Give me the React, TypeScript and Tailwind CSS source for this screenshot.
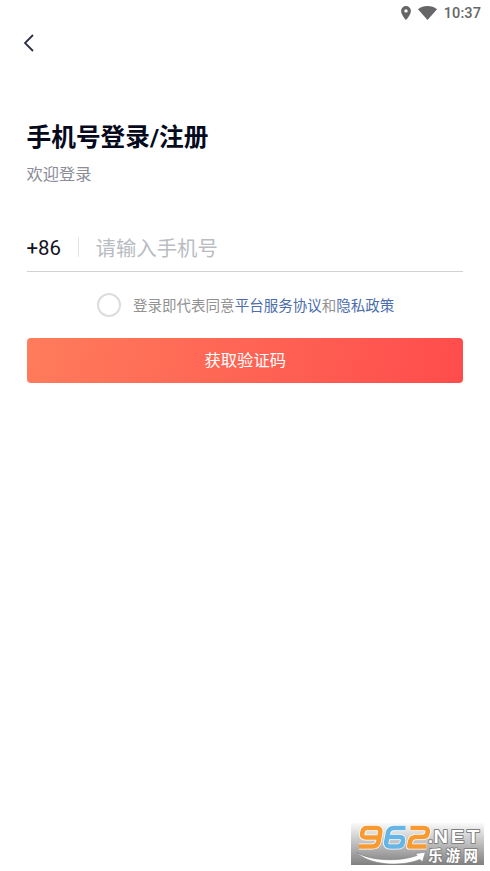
import { useState } from "react";

function StatusBar() {
  return (
    <div className="flex h-[26px] items-center justify-end pr-[9px] text-[#666666]">
      <svg width="10" height="14" viewBox="0 0 10 14" fill="currentColor" aria-hidden="true">
        <path
          fillRule="evenodd"
          d="M5 0a4.9 4.9 0 0 0-4.9 4.9C.1 8.5 5 14 5 14s4.9-5.500 4.900-9.100A4.900 4.900 0 0 0 5 0Zm0 3.200a1.700 1.700 0 1 1 0 3.400a1.700 1.700 0 0 1 0-3.400Z"
        />
      </svg>
      <svg className="ml-[7px]" width="19" height="14" viewBox="0 0 19 14" fill="currentColor" aria-hidden="true">
        <path d="M0 3.200C2.700 1.100 6 0 9.500 0S16.300 1.100 19 3.200L9.500 14Z" />
      </svg>
      <span className="ml-[7px] pt-0.5 text-[14.500px] leading-none font-medium tracking-[0.1px]">10:37</span>
    </div>
  );
}

const nine =
  "M26.500 14.500H15Q10.500 14.500 11.200 10.500L11.800 8Q12.500 5 16 5H25.500Q30 5 29.200 9.500L27.500 18.500Q26.500 23.500 21 23.500H8";
const six =
  "M54.500 5H43Q38 5 37 10L35.300 19Q34.500 23.500 39 23.500H46.500Q51 23.500 51.700 19.500L52 17.500Q52.600 14 48.500 14H37";
const two = "M59.500 5H72.500Q77.500 5 76.700 9.300Q76 14 71 14H65Q60 14 59.200 18.500L58.300 23.500H75.500";

function SiteBadge() {
  return (
    <svg width="133" height="42" viewBox="0 0 133 42" aria-label="962.NET 乐游网">
      <defs>
        <linearGradient id="badge" x1="0" y1="0" x2="0" y2="1">
          <stop offset="0" stopColor="#fafafa" />
          <stop offset="0.5" stopColor="#bdbdbd" />
          <stop offset="1" stopColor="#808080" />
        </linearGradient>
      </defs>
      <rect width="133" height="42" fill="url(#badge)" />
      <path
        d="M5.500 29.500C20 38 48 39 66 32.500L64.500 30.500L74.500 29L71.500 39L69 36.500C49 44.500 18 42 5.500 29.500Z"
        fill="#fff"
        stroke="#858585"
        strokeWidth="0.7"
      />
      <g fill="none" strokeLinejoin="round">
        <g stroke="#fff" strokeWidth="6.200">
          <path d={nine} />
          <path d={six} />
          <path d={two} />
        </g>
        <g strokeWidth="4.700">
          <path stroke="#f79a32" d={nine} />
          <path stroke="#66b5e5" d={six} />
          <path stroke="#f79a32" d={two} />
        </g>
      </g>
      <g
        className="font-['Liberation_Sans','Noto_Sans_CJK_SC',sans-serif] font-bold"
        fill="#fff"
        stroke="#808080"
        strokeWidth="1.800"
        strokeLinejoin="round"
        paintOrder="stroke"
      >
        <text x="77" y="19.800" fontSize="18">
          .
        </text>
        <text transform="translate(82.500 19.800) scale(1.120 1)" fontSize="18" letterSpacing="2.500">
          NET
        </text>
        <text x="77" y="37.500" fontSize="14.500" textLength="50">
          乐游网
        </text>
      </g>
    </svg>
  );
}

export default function App() {
  const [agreed, setAgreed] = useState(false);
  const [phone, setPhone] = useState("");

  return (
    <div className="flex h-[871px] w-[490px] flex-col bg-white font-[Roboto,'Noto_Sans_CJK_SC',sans-serif]">
      <StatusBar />

      <header className="flex h-[34px] items-center pl-[23px]">
        <button type="button" aria-label="返回">
          <svg width="12" height="18" viewBox="0 0 12 18" fill="none" stroke="#2c3042" strokeWidth="1.800">
            <path d="M10 1L2 9L10 17" />
          </svg>
        </button>
      </header>

      <main className="pr-[27px] pl-[26.500px] pt-[60px]">
        <h1 className="text-[24.700px] leading-9 font-bold whitespace-nowrap text-[#050a1c]">手机号登录/注册</h1>
        <p className="mt-[7px] text-[16.300px] leading-6 text-[#8c8d98]">欢迎登录</p>

        <div className="mt-[36px] flex h-[49px] items-center border-b border-[#d2d2d4]">
          <span className="w-[51px] pt-[3px] text-[20.400px] text-[#12131f]">+86</span>
          <span className="h-5 w-px bg-[#e3e3e6]" />
          <input
            className="ml-[17px] w-[300px] pt-[3px] text-[20.400px] leading-7 outline-none placeholder:text-[#b9bcc2]"
            placeholder="请输入手机号"
            value={phone}
            onChange={(e) => setPhone(e.target.value)}
          />
        </div>

        <div className="mt-[20px] flex h-[26px] items-center pl-[70px]">
          <button
            type="button"
            aria-label="同意协议"
            onClick={() => setAgreed(!agreed)}
            className={`size-6 rounded-full border-2 border-[#dcdce1] ${agreed ? "bg-[#ff4b4b]" : "bg-white"}`}
          />
          <p className="ml-[12.500px] pt-[3px] text-[14.530px] whitespace-nowrap text-[#929292]">
            登录即代表同意<span className="text-[#4b6dab]">平台服务协议</span>和
            <span className="text-[#4b6dab]">隐私政策</span>
          </p>
        </div>

        <button
          type="button"
          className="mt-[20px] h-[45px] w-full rounded-[4px] bg-linear-[105deg,#ff7c5c,#ff4c4c] pt-[2px] pl-px text-[16.300px] text-white"
        >
          获取验证码
        </button>
      </main>

      <footer className="mt-auto flex justify-end pr-[6px] pb-[6px]">
        <SiteBadge />
      </footer>
    </div>
  );
}
